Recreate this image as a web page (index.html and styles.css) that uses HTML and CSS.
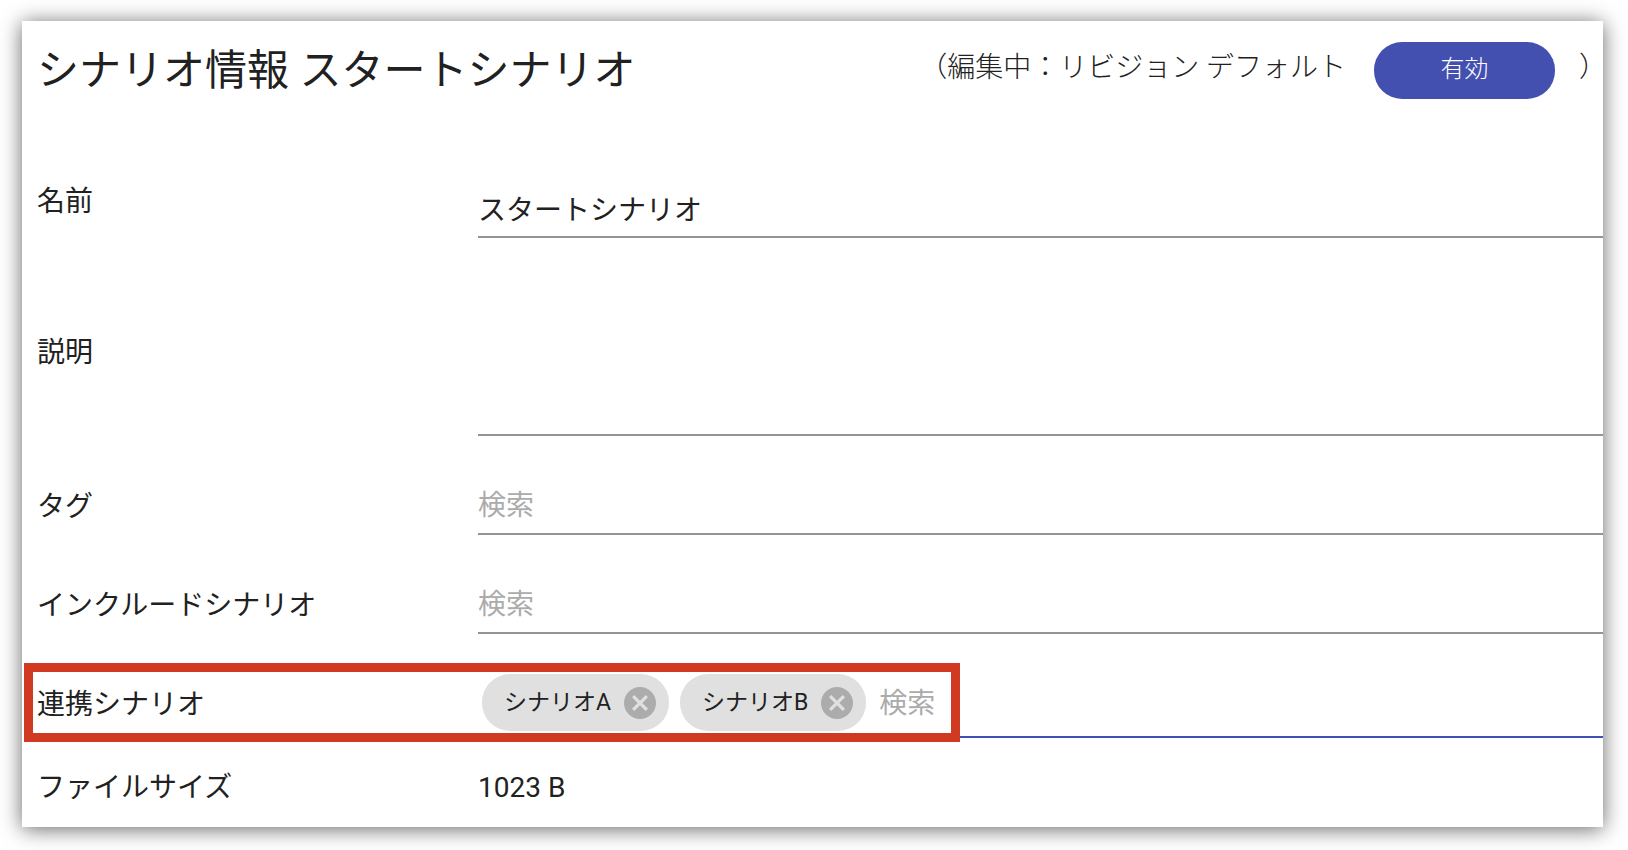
FILE: index.html
```
<!DOCTYPE html>
<html lang="ja">
<head>
  <meta charset="UTF-8">
  <meta name="viewport" content="width=device-width, initial-scale=1.0">
  <title>シナリオ情報</title>
  <link rel="stylesheet" href="styles.css">
</head>
<body>
  <main class="panel">
    <header class="header">
      <h1>シナリオ情報 スタートシナリオ</h1>
      <div class="revision">
        <span>（編集中：リビジョン デフォルト</span>
        <button type="button" class="button">有効</button>
        <span class="revision-end">）</span>
      </div>
    </header>

    <form class="form">
      <div class="row row-name">
        <label for="nameInput">名前</label>
        <input type="text" id="nameInput" class="field" value="スタートシナリオ">
      </div>

      <div class="row row-description">
        <label for="descriptionInput">説明</label>
        <textarea id="descriptionInput" class="field"></textarea>
      </div>

      <div class="row row-search">
        <label for="tagInput">タグ</label>
        <input type="text" id="tagInput" class="field" placeholder="検索">
      </div>

      <div class="row row-search">
        <label for="includeInput">インクルードシナリオ</label>
        <input type="text" id="includeInput" class="field" placeholder="検索">
      </div>

      <div class="row row-linked">
        <label for="linkedInput">連携シナリオ</label>
        <div class="chip-field">
          <span class="chip">シナリオA
            <button type="button" class="chip-remove" aria-label="シナリオAを削除">
              <svg viewBox="0 0 24 24"><path d="M12 0a12 12 0 1 0 0 24 12 12 0 0 0 0-24zm6 16.3L16.3 18 12 13.7 7.7 18 6 16.3 10.3 12 6 7.7 7.7 6 12 10.3 16.3 6 18 7.7 13.7 12z"/></svg>
            </button>
          </span>
          <span class="chip">シナリオB
            <button type="button" class="chip-remove" aria-label="シナリオBを削除">
              <svg viewBox="0 0 24 24"><path d="M12 0a12 12 0 1 0 0 24 12 12 0 0 0 0-24zm6 16.3L16.3 18 12 13.7 7.7 18 6 16.3 10.3 12 6 7.7 7.7 6 12 10.3 16.3 6 18 7.7 13.7 12z"/></svg>
            </button>
          </span>
          <input type="text" id="linkedInput" class="chip-input" placeholder="検索">
        </div>
        <div class="highlight"></div>
      </div>

      <div class="row row-size">
        <span>ファイルサイズ</span>
        <span>1023 B</span>
      </div>
    </form>
  </main>
</body>
</html>
```

FILE: styles.css
```
* {
  box-sizing: border-box;
}

body {
  margin: 0;
  padding: 21px 25px 24px 22px;
  background-color: #fff;
  color: #212121;
  font-family: Roboto, "Noto Sans CJK JP", sans-serif;
  font-size: 28px;
  line-height: 40px;
}

.panel {
  padding: 21px 0 19px 15px;
  background-color: #fff;
  box-shadow: 0 2px 20px rgba(0, 0, 0, 0.6);
}

.header {
  display: flex;
  justify-content: space-between;
  align-items: flex-start;
  margin-bottom: 80px;
}

.header h1 {
  margin: 0;
  font-size: 42px;
  font-weight: 400;
  line-height: 58px;
}

.revision {
  display: flex;
  align-items: flex-start;
  font-weight: 300;
  line-height: 52px;
}

/* the closing bracket sits in the left half of its cell */
.revision-end {
  width: 24px;
}

.button {
  width: 181px;
  height: 57px;
  margin: 0 24px 0 28px;
  padding: 0 0 3px;
  border: none;
  border-radius: 28px;
  background-color: #4450b0;
  color: #fff;
  font: inherit;
  font-size: 24px;
  cursor: pointer;
}

.row {
  display: grid;
  grid-template-columns: 441px 1fr;
  align-items: start;
}

.row label {
  padding-top: 2px;
}

.row-name {
  margin-bottom: 93px;
}

.row-name .field {
  height: 58px;
  padding: 8px 0;
}

.row-description,
.row-search {
  margin-bottom: 49px;
}

.row-linked {
  position: relative;
  margin: -9px 0 30px;
}

.row-linked label {
  padding-top: 11px;
}

.field {
  display: block;
  width: 100%;
  height: 50px;
  padding: 0 0 8px;
  border: none;
  border-bottom: 2px solid #949494;
  background: none;
  color: inherit;
  font: inherit;
  outline: none;
}

textarea.field {
  height: 105px;
  resize: none;
}

.field::placeholder,
.chip-input::placeholder {
  color: #ababab;
  opacity: 1;
}

.chip-field {
  display: flex;
  align-items: center;
  gap: 11px;
  padding: 0 0 5px 4px;
  border-bottom: 2px solid #3f51b5;
}

.chip {
  display: flex;
  align-items: center;
  gap: 13px;
  height: 57px;
  padding: 0 13px 0 22px;
  border-radius: 28px;
  background-color: #e0e0e0;
  font-size: 23px;
}

.chip-remove {
  width: 32px;
  height: 32px;
  padding: 0;
  border: none;
  background: none;
  cursor: pointer;
}

.chip-remove svg {
  display: block;
  fill: #acacac;
}

.chip-input {
  flex: 1;
  min-width: 0;
  height: 42px;
  padding: 2px 2px 0;
  border: none;
  background: none;
  color: inherit;
  font: inherit;
  outline: none;
}

/* red frame around the linked scenarios */
.highlight {
  position: absolute;
  top: -11px;
  left: -13px;
  width: 936px;
  height: 79px;
  border: 9px solid #d03a20;
  pointer-events: none;
}
```
